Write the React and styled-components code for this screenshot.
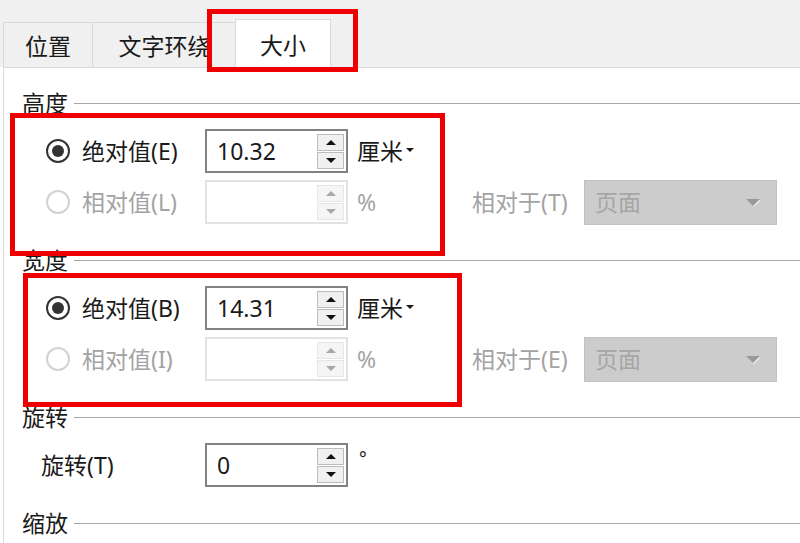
import styled, { createGlobalStyle } from 'styled-components'

const GlobalStyle = createGlobalStyle`
  html, body {
    margin: 0;
    padding: 0;
    background: #fff;
  }
  body {
    font-family: "Noto Sans", "Noto Sans CJK SC", sans-serif;
    font-size: 23px;
    color: #1a1a1a;
  }
`

const Dialog = styled.div`
  position: relative;
  width: 800px;
  height: 543px;
  overflow: hidden;
  background: #fff;
`

const TabStrip = styled.div`
  display: flex;
  align-items: flex-end;
  height: 67px;
  padding-left: 3px;
  background: #f0f0f0;
  box-sizing: border-box;
`

const Tab = styled.div`
  position: relative;
  display: flex;
  align-items: center;
  justify-content: center;
  box-sizing: border-box;
  width: ${({ $w }) => $w}px;
  height: ${({ $active }) => ($active ? 49 : 45)}px;
  margin-left: ${({ $active }) => ($active ? -2 : 0)}px;
  margin-bottom: ${({ $active }) => ($active ? -1 : 0)}px;
  border: 1px solid #d9d9d9;
  border-bottom: none;
  border-left: ${({ $first, $active }) => ($first || $active ? '1px solid #d9d9d9' : 'none')};
  background: ${({ $active }) => ($active ? '#fff' : '#f0f0f0')};
  z-index: ${({ $active }) => ($active ? 1 : 0)};
  line-height: 1;
  padding-top: 2px;
  white-space: nowrap;
  overflow: hidden;
`

const Content = styled.div`
  margin-left: 3px;
  border-top: 1px solid #d9d9d9;
  border-left: 1px solid #d9d9d9;
  padding-top: 23px;
  height: 476px;
  box-sizing: border-box;
`

const Section = styled.section`
  margin-bottom: 24px;
`

const Legend = styled.div`
  display: flex;
  align-items: center;
  height: 24px;
  padding-left: 18px;
  margin-bottom: 14px;
  line-height: 1;

  &::after {
    content: '';
    flex: 1;
    height: 1px;
    background: #a8a8a8;
    margin-left: 6px;
  }
`

const Rows = styled.div`
  display: flex;
  flex-direction: column;
  gap: 7px;
`

const Row = styled.div`
  display: flex;
  align-items: center;
  height: 44px;
  padding-left: ${({ $indent }) => $indent}px;
`

const Choice = styled.label`
  display: flex;
  align-items: center;
  gap: 12px;
  width: ${({ $w }) => $w}px;
  color: ${({ $disabled }) => ($disabled ? '#a3a3a3' : '#1a1a1a')};
  line-height: 1;
  white-space: nowrap;
`

const Radio = styled.span`
  display: flex;
  align-items: center;
  justify-content: center;
  width: 24px;
  height: 24px;
  box-sizing: border-box;
  border-radius: 50%;
  border: 2px solid ${({ $disabled }) => ($disabled ? '#d2d2d2' : '#333')};

  &::after {
    content: '';
    display: ${({ $checked }) => ($checked ? 'block' : 'none')};
    width: 12px;
    height: 12px;
    border-radius: 50%;
    background: #333;
  }
`

const SpinBox = styled.div`
  display: flex;
  align-items: center;
  justify-content: space-between;
  width: 143px;
  height: 44px;
  box-sizing: border-box;
  border: 2px solid ${({ $disabled }) => ($disabled ? '#e2e2e2' : '#828282')};
  padding: 0 2px 0 10px;
  background: #fff;
  line-height: 1;
`

const Spin = styled.div`
  display: flex;
  flex-direction: column;
  gap: 1px;
  width: 27px;
`

const SpinButton = styled.div`
  display: flex;
  align-items: center;
  justify-content: center;
  height: 17px;
  box-sizing: border-box;
  border: 1px solid ${({ $disabled }) => ($disabled ? '#e6e6e6' : '#bcbcbc')};
  background: ${({ $disabled }) => ($disabled ? '#f5f5f5' : '#f0f0f0')};

  &::after {
    content: '';
    width: 0;
    height: 0;
    border-left: 5px solid transparent;
    border-right: 5px solid transparent;
    ${({ $down, $disabled }) =>
      $down
        ? `border-top: 5px solid ${$disabled ? '#a8a8a8' : '#111'};`
        : `border-bottom: 5px solid ${$disabled ? '#a8a8a8' : '#111'};`}
  }
`

const Unit = styled.div`
  display: flex;
  align-items: center;
  width: 115px;
  margin-left: 9px;
  color: ${({ $disabled }) => ($disabled ? '#a3a3a3' : '#1a1a1a')};
  line-height: 1;
  white-space: nowrap;
`

const Degree = styled.span`
  margin-left: 2px;
  margin-top: -14px;
  font-size: 18px;
`

const Caret = styled.span`
  width: 0;
  height: 0;
  margin-left: 3px;
  margin-top: -2px;
  border-left: 4px solid transparent;
  border-right: 4px solid transparent;
  border-top: 4px solid #1a1a1a;
`

const RelLabel = styled.div`
  width: 112px;
  color: #a3a3a3;
  line-height: 1;
  white-space: nowrap;
`

const Select = styled.div`
  display: flex;
  align-items: center;
  justify-content: space-between;
  width: 193px;
  height: 45px;
  box-sizing: border-box;
  padding: 0 10px 0 10px;
  background: #cccccc;
  border: 1px solid #c2c2c2;
  color: #a6a6a6;
  line-height: 1;

  &::after {
    content: '';
    width: 0;
    height: 0;
    border-left: 7px solid transparent;
    border-right: 7px solid transparent;
    border-top: 7px solid #999;
    margin-right: 6px;
    filter: drop-shadow(1px 1px 0 #eee);
  }
`

const Highlight = styled.div`
  position: absolute;
  left: ${({ $x }) => $x}px;
  top: ${({ $y }) => $y}px;
  width: ${({ $w }) => $w}px;
  height: ${({ $h }) => $h}px;
  box-sizing: border-box;
  border: 5px solid #ee0000;
  pointer-events: none;
  z-index: 5;
`

const SpinInput = ({ value, disabled }) => (
  <SpinBox $disabled={disabled}>
    <span>{value}</span>
    <Spin>
      <SpinButton $disabled={disabled} />
      <SpinButton $disabled={disabled} $down />
    </Spin>
  </SpinBox>
)

const SizeGroup = ({ title, absKey, relKey, value, relTo }) => (
  <Section>
    <Legend>{title}</Legend>
    <Rows>
      <Row $indent={42}>
        <Choice $w={159}>
          <Radio $checked />
          绝对值({absKey})
        </Choice>
        <SpinInput value={value} />
        <Unit>
          厘米
          <Caret />
        </Unit>
      </Row>
      <Row $indent={42}>
        <Choice $w={159} $disabled>
          <Radio $disabled />
          相对值({relKey})
        </Choice>
        <SpinInput disabled />
        <Unit $disabled>%</Unit>
        <RelLabel>相对于({relTo})</RelLabel>
        <Select>页面</Select>
      </Row>
    </Rows>
  </Section>
)

const App = () => (
  <Dialog>
    <GlobalStyle />
    <TabStrip>
      <Tab $w={90} $first>位置</Tab>
      <Tab $w={144}>文字环绕</Tab>
      <Tab $w={96} $active>大小</Tab>
    </TabStrip>
    <Content>
      <SizeGroup title="高度" absKey="E" relKey="L" value="10.32" relTo="T" />
      <SizeGroup title="宽度" absKey="B" relKey="I" value="14.31" relTo="E" />
      <Section>
        <Legend>旋转</Legend>
        <Rows>
          <Row $indent={37}>
            <Choice $w={164}>旋转(T)</Choice>
            <SpinInput value="0" />
            <Unit>
              <Degree>°</Degree>
            </Unit>
          </Row>
        </Rows>
      </Section>
      <Legend>缩放</Legend>
    </Content>
    <Highlight $x={207} $y={9} $w={151} $h={63} />
    <Highlight $x={10} $y={113} $w={435} $h={143} />
    <Highlight $x={23} $y={273} $w={439} $h={134} />
  </Dialog>
)

export default App
